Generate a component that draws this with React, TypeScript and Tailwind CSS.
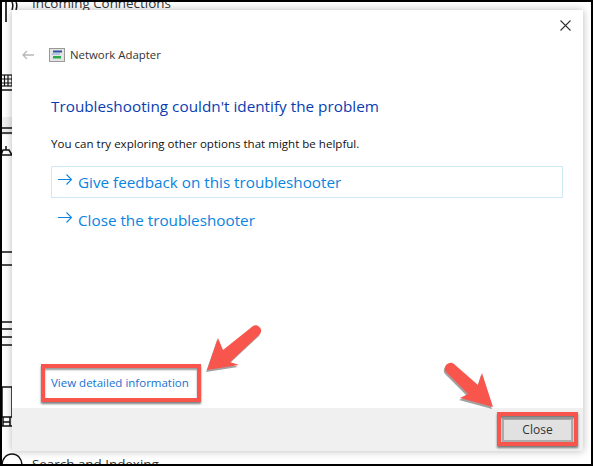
const font = "font-['Open_Sans','Noto_Sans',sans-serif]";

function LeftStrip() {
  return (
    <svg className="absolute left-0 top-0" width="30" height="466" viewBox="0 0 30 466" fill="none" stroke="#111" strokeWidth="1.5">
      <rect x="2" y="117" width="10" height="18" fill="#efefef" stroke="none" />
      <path d="M6 2v20" strokeWidth="1.7" />
      <path d="M12 2c1 2 1 5 0 8M16 2c1 2 1 5 0 8" />
      <rect x="1" y="75" width="11" height="11" strokeWidth="1.2" />
      <path d="M1 79h11M1 83h11M4.5 75v11M8 75v11" strokeWidth="1.2" />
      <path d="M1 90h11M1 128h11M1 133h11" />
      <path d="M6 146v4M1 155l2-5h6l3 5M1 155h11" />
      <path d="M1 252h11M1 265h11M1 322h11M1 329h11M1 337h11M1 345h11" />
      <path d="M2 387h10v30H2zM3 417v9M10 417v9M3 422h7M1 426h11" />
      <path d="M2 466c0-7 4-12 10-12s10 5 10 12" />
    </svg>
  );
}

function Arrow({ className, d }: { className: string; d: string }) {
  return (
    <svg className={className} viewBox="0 0 70 60" width="70" height="60">
      <path d={d} fill="#555" opacity="0.55" transform="translate(-1 2)" />
      <path d={d} fill="#f8564d" />
    </svg>
  );
}

function LinkArrow() {
  return (
    <svg className="mr-[6px] -translate-y-[3px]" width="14" height="11" viewBox="0 0 14 11" fill="none" stroke="#0a84e0" strokeWidth="1.1">
      <path d="M0 5.5h13.5M8.5 0.5l5 5-5 5" />
    </svg>
  );
}

export default function App() {
  return (
    <div className={`relative h-[466px] w-[593px] overflow-hidden border-2 border-black bg-white text-[#111] ${font}`}>
      <div className="absolute left-[30px] top-[-9px] text-[13.4px] leading-5 text-[#333]">Incoming Connections</div>
      <div className="absolute left-[30px] top-[452px] text-[13.4px] leading-5 text-[#333]">Search and Indexing</div>
      <div className="absolute inset-[-2px]">
        <LeftStrip />
      </div>

      <div className="absolute left-[10px] top-[8px] flex h-[441px] w-[571px] flex-col bg-white shadow-[0_0_8px_rgba(0,0,0,0.28)]">
        <div className="flex h-[35px] items-start justify-end pr-[12px] pt-[10px]">
          <svg width="11" height="11" viewBox="0 0 11 11" stroke="#333" strokeWidth="1.1">
            <path d="M0.5 0.5l10 10M10.5 0.5l-10 10" />
          </svg>
        </div>
        <div className="flex items-center pl-[10px]">
          <svg width="12" height="10" viewBox="0 0 12 10" fill="none" stroke="#b8b8b8" strokeWidth="1.3">
            <path d="M12 5H1M5 1L1 5l4 4" />
          </svg>
          <svg className="ml-[15px]" width="16" height="14" viewBox="0 0 16 14">
            <rect x="0.5" y="0.5" width="15" height="13" fill="#e4e4e4" stroke="#999" />
            <path d="M4 2.5h9v2H4z" fill="#2f4f9f" />
            <path d="M3 5.5h8v1H3z" fill="#7ea6d8" />
            <path d="M4 8h8v2.5H4z" fill="#2aa84a" />
          </svg>
          <span className="ml-[5px] text-[11.4px] leading-5 text-[#333]">Network Adapter</span>
        </div>

        <div className="flex flex-1 flex-col pl-[39px] pr-[20px]">
          <h1 className="mt-[29px] text-[15.3px] font-normal leading-6 text-[#0a3db0]">Troubleshooting couldn't identify the problem</h1>
          <p className="mt-[16px] text-[11.55px] leading-5">You can try exploring other options that might be helpful.</p>
          <div className="mt-[12px] flex h-[32px] items-center border border-[#cfe8f7] pl-[6px] text-[15.25px] text-[#0a84e0]">
            <LinkArrow />Give feedback on this troubleshooter
          </div>
          <div className="mt-[6px] flex h-[33px] items-center pl-[7px] text-[15.25px] text-[#0a84e0]">
            <LinkArrow />Close the troubleshooter
          </div>
          <div className="mt-auto mb-[15px] text-[11.5px] leading-5 text-[#1672d0]">View detailed information</div>
        </div>

        <div className="flex h-[43px] items-center justify-end bg-[#f0f0f0] pr-[10px]">
          <div className="flex h-[24px] w-[71px] items-center justify-center border-2 border-[#adadad] bg-[#e1e1e1] text-[12px] text-[#333]">Close</div>
        </div>
      </div>

      <div className="absolute left-[39px] top-[362px] h-[38px] w-[160px] border-4 border-[#f8564d] shadow-[0_2px_2px_rgba(0,0,0,0.5),inset_0_2px_2px_rgba(0,0,0,0.4)]" />
      <div className="absolute left-[495px] top-[410px] h-[34px] w-[81px] border-4 border-[#f8564d] shadow-[0_2px_2px_rgba(0,0,0,0.5),inset_0_2px_2px_rgba(0,0,0,0.5)]" />

      <Arrow className="absolute left-[196px] top-[316px]" d="M9 52L20 20 25 32 55 8c4-3 11 3 7 8L32 44 41 47Z" />
      <Arrow className="absolute left-[438px] top-[356px]" d="M53 49L42 15 38 27 14 6c-5-4-12 3-8 8L28 36 20 40Z" />
    </div>
  );
}
